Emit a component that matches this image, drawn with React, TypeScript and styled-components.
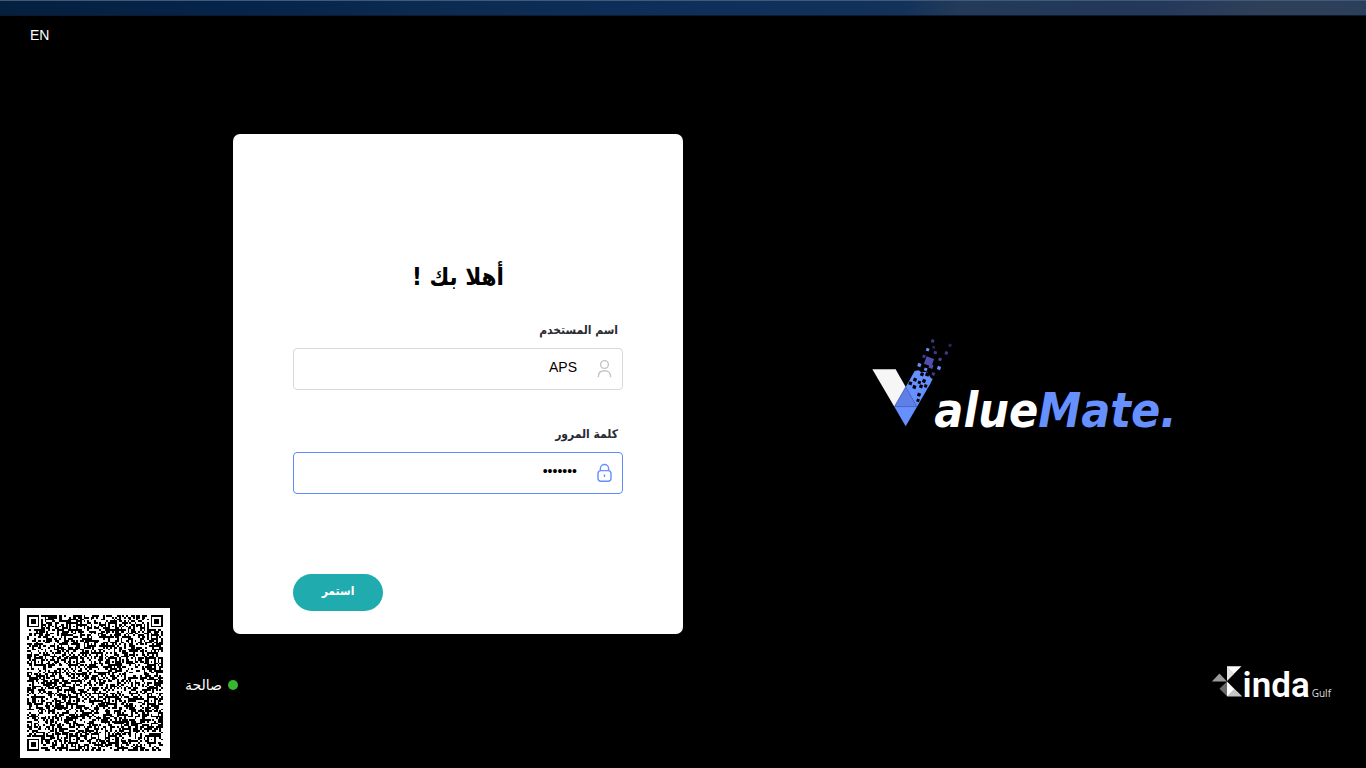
import React from 'react';
import styled, { createGlobalStyle } from 'styled-components';

const GlobalStyle = createGlobalStyle`
  *, *::before, *::after { box-sizing: border-box; }
  body { margin: 0; background: #000; font-family: "Liberation Sans", "DejaVu Sans", sans-serif; }
`;

const Page = styled.div`
  display: flex;
  flex-direction: column;
  min-height: 100vh;
  background: #000;
  color: #fff;
`;

const TopStrip = styled.div`
  height: 16px;
  border-top: 1px solid #3f5a7c;
  border-bottom: 1px solid #0c1a2c;
  background: linear-gradient(90deg, #05203f 0%, #06234a 18%, #0b2a50 30%, #0d2f5a 50%, #12325a 66%, #233a58 70%, #24385a 85%, #2f3f58 92%, #2c3f5a 100%);
`;

const Content = styled.div`
  flex: 1;
  display: grid;
  grid-template-columns: minmax(0, 1fr) 450px 50%;
`;

const SidePanel = styled.aside`
  display: flex;
  flex-direction: column;
  justify-content: space-between;
  align-items: flex-start;
  padding: 10px 0 10px 20px;
`;

const LanguageButton = styled.button`
  margin: 0 0 0 10px;
  padding: 0;
  border: 0;
  background: none;
  color: #fff;
  font: 14px/18px "Liberation Sans", Arial, sans-serif;
  cursor: pointer;
`;

const LicenceRow = styled.div`
  display: flex;
  align-items: center;
  gap: 15px;
`;

const QrSvg = styled.svg`
  flex: none;
  width: 150px;
  height: 150px;
  background: #fff;
`;

const Status = styled.div`
  display: flex;
  align-items: center;
  gap: 6px;
  padding-top: 4px;
  font: 14px/18px "DejaVu Sans", sans-serif;
  white-space: nowrap;
`;

const StatusDot = styled.span`
  width: 10px;
  height: 10px;
  border-radius: 50%;
  background: #37b62f;
`;

const CardColumn = styled.main`
  display: flex;
  align-items: center;
  padding-bottom: 16px;
`;

const Card = styled.form`
  display: flex;
  flex-direction: column;
  width: 100%;
  min-height: 500px;
  padding: 125px 60px 23px;
  border-radius: 7px;
  background: #fff;
  color: #000;
`;

const Title = styled.h1`
  margin: 0 0 26px;
  font: bold 24px/36px "DejaVu Sans Condensed", "DejaVu Sans", sans-serif;
  text-align: center;
`;

const FieldGroup = styled.div`
  display: flex;
  flex-direction: column;
  gap: 9px;
  margin-bottom: 35px;
`;

const Label = styled.label`
  padding: 0 5px;
  color: #2b2b33;
  font: bold 12px/18px "DejaVu Sans Condensed", "DejaVu Sans", sans-serif;
`;

const Field = styled.div<{ $active?: boolean }>`
  display: flex;
  align-items: center;
  gap: 19px;
  height: 42px;
  padding: 0 10px;
  border: 1px solid ${(p) => (p.$active ? '#5f8bff' : '#d8d8dd')};
  border-radius: 4px;
  color: ${(p) => (p.$active ? '#6690ff' : '#c3c3c8')};
`;

const Input = styled.input`
  flex: 1;
  min-width: 0;
  height: 36px;
  padding: 0 0 4px;
  border: 0;
  outline: 0;
  background: none;
  color: #000;
  font: 14px "Liberation Sans", Arial, sans-serif;
`;

const FieldIcon = styled.svg`
  flex: none;
  width: 16px;
  height: 20px;
  fill: none;
  stroke: currentColor;
  stroke-width: 1.4;
`;

const SubmitButton = styled.button`
  align-self: flex-end;
  width: 90px;
  height: 37px;
  margin-top: auto;
  padding: 0 0 4px;
  border: 0;
  border-radius: 19px;
  background: #20abaf;
  color: #fff;
  font: bold 12px/18px "DejaVu Sans Condensed", "DejaVu Sans", sans-serif;
  cursor: pointer;
`;

const BrandPanel = styled.section`
  display: grid;
  grid-template-rows: 1fr auto 1fr;
  padding-bottom: 16px;
`;

const ValueMate = styled.div`
  grid-row: 2;
  justify-self: center;
  display: flex;
  align-items: baseline;
  color: #fff;
  font: italic bold 48px/40px "DejaVu Sans Condensed", "DejaVu Sans", sans-serif;
`;

const BrandMark = styled.svg`
  width: 62px;
  height: 88px;
  overflow: visible;
`;

const Accent = styled.span`
  color: #6690ff;
`;

const Kinda = styled.footer`
  grid-row: 3;
  align-self: end;
  justify-self: end;
  display: flex;
  align-items: baseline;
  margin: 0 35px 52px 0;
`;

const KindaMark = styled.svg`
  width: 32px;
  height: 31px;
`;

const KindaName = styled.span`
  margin: 0 2px 0 0;
  font: 600 35px/28px Roboto, sans-serif;
`;

const KindaRegion = styled.span`
  color: #ddd;
  font: 10px/12px "Open Sans", sans-serif;
`;

const QR_SIZE = 77;
const ALIGNMENT = [6, 26, 48, 70];

function ring(dx: number, dy: number) {
  return Math.max(Math.abs(dx), Math.abs(dy));
}

function buildQrPath() {
  let seed = 20231;
  const random = () => {
    seed = (seed + 0x6d2b79f5) | 0;
    let t = Math.imul(seed ^ (seed >>> 15), 1 | seed);
    t = (t + Math.imul(t ^ (t >>> 7), 61 | t)) ^ t;
    return ((t ^ (t >>> 14)) >>> 0) / 4294967296;
  };
  const finders = [[3, 3], [QR_SIZE - 4, 3], [3, QR_SIZE - 4]];
  let d = '';
  for (let y = 0; y < QR_SIZE; y++) {
    for (let x = 0; x < QR_SIZE; x++) {
      let dark = random() < 0.5;
      if (x === 6 || y === 6) dark = (x + y) % 2 === 0;
      for (const ay of ALIGNMENT) {
        for (const ax of ALIGNMENT) {
          const r = ring(x - ax, y - ay);
          if (r <= 2) dark = r !== 1;
        }
      }
      for (const [fx, fy] of finders) {
        const r = ring(x - fx, y - fy);
        if (r <= 4) dark = r !== 2 && r !== 4;
      }
      if (dark) d += `M${x} ${y}h1v1h-1z`;
    }
  }
  return d;
}

const qrPath = buildQrPath();

type Bit = [number, number, number, string];

const bits: Bit[] = [
  [212, 36, 9, '#3f3a86'], [264, 49, 9, '#31205c'], [215, 55, 8, '#31205c'],
  [197, 62, 9, '#6690ff'], [220, 71, 9, '#3f3a86'], [253, 72, 9, '#3f3a86'],
  [186, 82, 9, '#3f3a86'], [201, 97, 24, '#504fae'], [234, 91, 9, '#4a459c'],
  [207, 112, 12, '#504fae'], [172, 108, 10, '#6690ff'], [191, 121, 9, '#6690ff'],
  [231, 117, 10, '#6690ff'], [214, 135, 9, '#3f3a86'],
  [180, 136, 10, '#000'], [196, 136, 11, '#000'], [159, 152, 10, '#000'],
  [145, 163, 10, '#000'], [172, 160, 9, '#000'], [186, 156, 10, '#000'],
  [157, 174, 10, '#000'], [177, 172, 10, '#000'], [191, 171, 9, '#000'],
  [171, 197, 10, '#000'], [201, 180, 8, '#000'],
  [168, 214, 9, '#000'], [213, 145, 9, '#000'],
];

function ValueMateMark() {
  return (
    <BrandMark viewBox="30 30 186 264" aria-hidden="true">
      <path d="M31 121H101L131 174L97 233Z" fill="#f6f6f6" />
      <path d="M131 174L158 126L170 124L178 130L196 128L201 138L206 146L213 148L205 164L165 233Z" fill="#6690ff" />
      <path d="M131 174L165 233H97Z" fill="#5f7fe8" />
      <path d="M97 233H165L131 292Z" fill="#6690ff" />
      <path d="M131 174L97 233H165L131 174" fill="none" stroke="#4c68c4" strokeWidth="1.5" />
      {bits.map(([x, y, s, fill]) => (
        <rect key={`${x}-${y}`} x={x - s / 2} y={y - s / 2} width={s} height={s} fill={fill} transform={`rotate(20 ${x} ${y})`} />
      ))}
    </BrandMark>
  );
}

export default function App() {
  return (
    <Page>
      <GlobalStyle />
      <TopStrip />
      <Content>
        <SidePanel>
          <LanguageButton type="button">EN</LanguageButton>
          <LicenceRow>
            <QrSvg viewBox="-4 -4 85 85" shapeRendering="crispEdges" role="img" aria-label="QR">
              <path d={qrPath} fill="#000" />
            </QrSvg>
            <Status>
              <span lang="ar">صالحة</span>
              <StatusDot />
            </Status>
          </LicenceRow>
        </SidePanel>

        <CardColumn>
          <Card dir="rtl" lang="ar" onSubmit={(e) => e.preventDefault()}>
            <Title>أهلا بك !</Title>
            <FieldGroup>
              <Label htmlFor="username">اسم المستخدم</Label>
              <Field>
                <FieldIcon viewBox="0 0 16 20" aria-hidden="true">
                  <circle cx="8.5" cy="5.5" r="3.9" />
                  <path d="M2.4 18.2V17.4C2.4 13.6 5 11.8 8.5 11.8S14.6 13.6 14.6 17.4V18.2" />
                </FieldIcon>
                <Input id="username" type="text" defaultValue="APS" />
              </Field>
            </FieldGroup>
            <FieldGroup>
              <Label htmlFor="password">كلمة المرور</Label>
              <Field $active>
                <FieldIcon viewBox="0 0 16 20" aria-hidden="true">
                  <rect x="2" y="7.6" width="13" height="10.6" rx="3" />
                  <path d="M4.4 7.6V5.6A4.1 4.1 0 0 1 12.6 5.6V7.6M8.5 11.6V14" />
                </FieldIcon>
                <Input id="password" type="password" defaultValue="1234567" />
              </Field>
            </FieldGroup>
            <SubmitButton type="submit">استمر</SubmitButton>
          </Card>
        </CardColumn>

        <BrandPanel>
          <ValueMate>
            <ValueMateMark />
            <span>alue</span>
            <Accent>Mate.</Accent>
          </ValueMate>
          <Kinda>
            <KindaMark viewBox="0 0 90 90" aria-hidden="true">
              <path d="M45 1H87L45 43Z" fill="#fff" />
              <path d="M45 1L66 22L45 43Z" fill="#e2e2e2" />
              <path d="M1 45L23 22L45 45Z" fill="#9a9a9a" />
              <path d="M45 45V88L23 66Z" fill="#6a6a6a" />
              <path d="M45 45L88 88H45Z" fill="#fff" />
              <path d="M45 88L66 67L88 88Z" fill="#c4c4c4" />
            </KindaMark>
            <KindaName>inda</KindaName>
            <KindaRegion>Gulf</KindaRegion>
          </Kinda>
        </BrandPanel>
      </Content>
    </Page>
  );
}
